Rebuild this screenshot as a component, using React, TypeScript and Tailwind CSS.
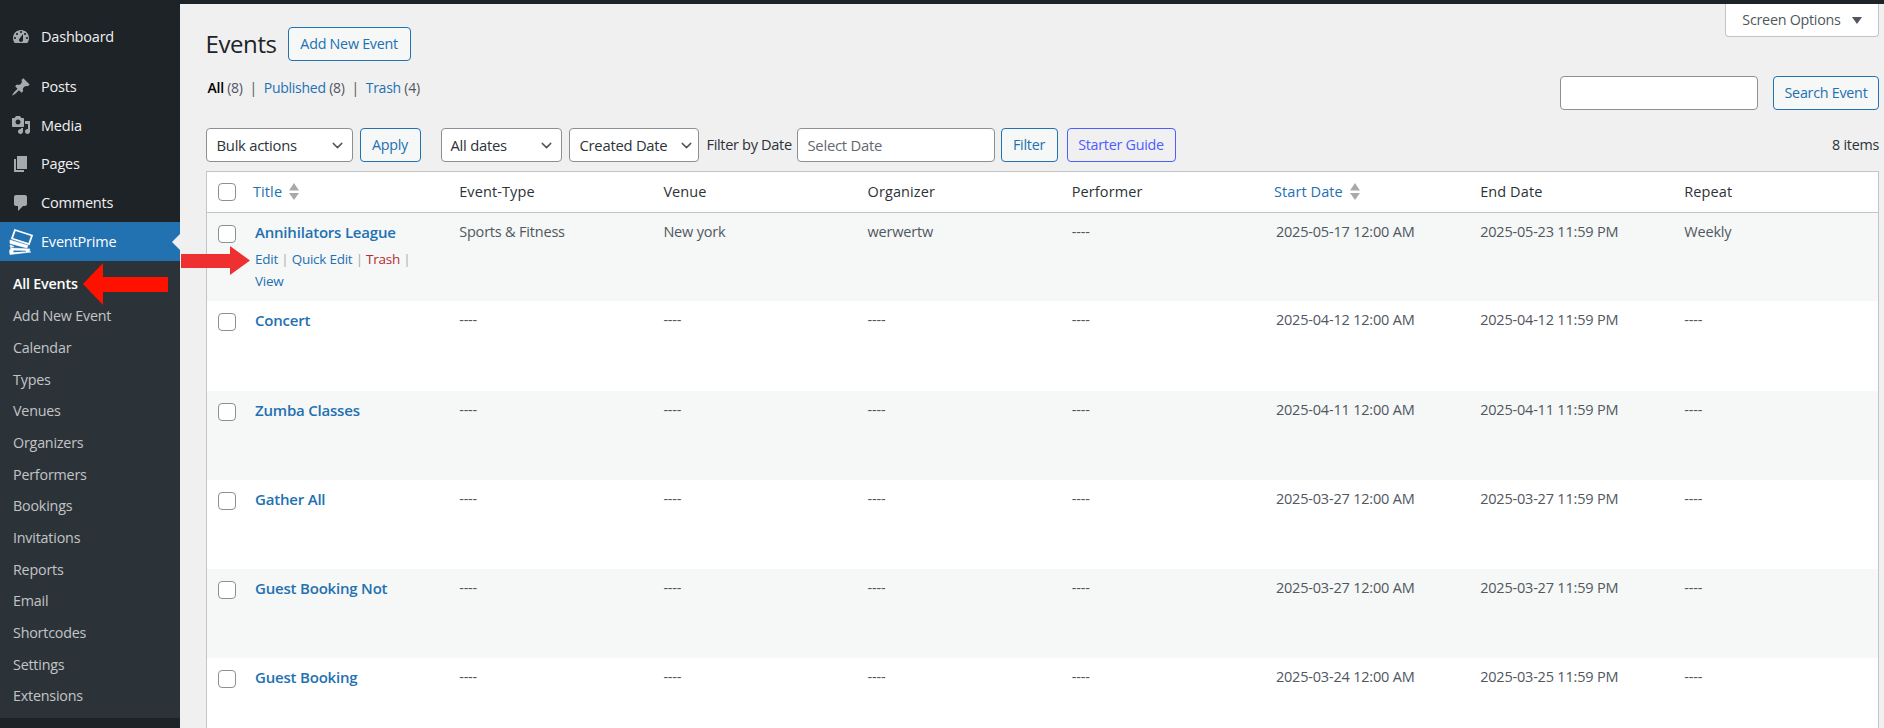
import { ChevronDown } from 'lucide-react';

const font = "font-['Open_Sans','Noto_Sans',sans-serif]";

const ICONS: Record<string, string> = {
  dashboard:
    'M3.76 16h12.48c1.1-1.37 1.76-3.11 1.76-5 0-4.42-3.58-8-8-8s-8 3.58-8 8c0 1.89.66 3.63 1.76 5zM10 4c.55 0 1 .45 1 1s-.45 1-1 1-1-.45-1-1 .45-1 1-1zM6 6c.55 0 1 .45 1 1s-.45 1-1 1-1-.45-1-1 .45-1 1-1zm8 0c.55 0 1 .45 1 1s-.45 1-1 1-1-.45-1-1 .45-1 1-1zm-5.37 5.55L12 7v6c0 1.1-.9 2-2 2s-2-.9-2-2c0-.57.24-1.08.63-1.45zM4 10c.55 0 1 .45 1 1s-.45 1-1 1-1-.45-1-1 .45-1 1-1zm12 0c.55 0 1 .45 1 1s-.45 1-1 1-1-.45-1-1 .45-1 1-1z',
  posts:
    'M10.44 3.02l1.82-1.82 6.36 6.35-1.83 1.82c-1.05-.68-2.48-.57-3.41.36l-.75.75c-.92.93-1.04 2.35-.35 3.41l-1.83 1.82-2.41-2.41-2.8 2.79c-.42.42-3.38 2.71-3.8 2.29s1.86-3.39 2.28-3.81l2.79-2.79L4.1 9.36l1.83-1.82c1.05.69 2.48.57 3.4-.36l.75-.75c.93-.92 1.05-2.35.36-3.41z',
  media:
    'M13 11V4c0-.55-.45-1-1-1h-1.67L9 1H5L3.67 3H2c-.55 0-1 .45-1 1v7c0 .55.45 1 1 1h10c.55 0 1-.45 1-1zM7 4.5c1.38 0 2.5 1.12 2.5 2.5S8.38 9.5 7 9.5 4.5 8.38 4.5 7 5.62 4.5 7 4.5zM14 6h5v10.5c0 1.38-1.12 2.5-2.5 2.5S14 17.88 14 16.5s1.12-2.5 2.5-2.5c.17 0 .34.02.5.05V9h-3V6zm-4 8.05V13h2v3.5c0 1.38-1.12 2.5-2.5 2.5S7 17.88 7 16.5 8.12 14 9.5 14c.17 0 .34.02.5.05z',
  pages: 'M6 15V2h10v13H6zm-1 1h8v2H3V5h2v11z',
  comments:
    'M5 2h9c1.1 0 2 .9 2 2v7c0 1.1-.9 2-2 2h-2l-5 5v-5H5c-1.1 0-2-.9-2-2V4c0-1.1.9-2 2-2z',
};

const TOP_MENU = [
  { label: 'Posts', icon: 'posts' },
  { label: 'Media', icon: 'media' },
  { label: 'Pages', icon: 'pages' },
  { label: 'Comments', icon: 'comments' },
];

const SUB_MENU = [
  'Add New Event',
  'Calendar',
  'Types',
  'Venues',
  'Organizers',
  'Performers',
  'Bookings',
  'Invitations',
  'Reports',
  'Email',
  'Shortcodes',
  'Settings',
  'Extensions',
];

const ROWS = [
  { title: 'Concert', start: '2025-04-12 12:00 AM', end: '2025-04-12 11:59 PM' },
  { title: 'Zumba Classes', start: '2025-04-11 12:00 AM', end: '2025-04-11 11:59 PM' },
  { title: 'Gather All', start: '2025-03-27 12:00 AM', end: '2025-03-27 11:59 PM' },
  { title: 'Guest Booking Not', start: '2025-03-27 12:00 AM', end: '2025-03-27 11:59 PM' },
  { title: 'Guest Booking', start: '2025-03-24 12:00 AM', end: '2025-03-25 11:59 PM' },
];

function MenuIcon({ name }: { name: string }) {
  return (
    <svg viewBox="0 0 20 20" className="w-5 h-5 fill-[#a7aaad]" fillRule="evenodd">
      <path d={ICONS[name]} />
    </svg>
  );
}

function TicketsLogo() {
  return (
    <svg viewBox="0 0 32 32" className="w-8 h-8 shrink-0 fill-white stroke-white">
      <path d="M10 5 L27 10.5 L24 19 L7 13.5 Z" fill="none" strokeWidth="1.8" />
      <path d="M5 15 L23 20.5 L22 23 L5 18.5 Z" strokeWidth="0.6" />
      <path d="M5 20 L9 21.5 L5.5 22.5 Z" strokeWidth="0.6" />
      <path d="M6 23 L25 24 L24 26.5 L26 27 L5 29.5 L4.5 26 Z" strokeWidth="0.6" />
      <path d="M8.5 25.6 L21 25.8 L21 26.6 L8.5 27.2 Z" fill="#2271b1" stroke="none" />
    </svg>
  );
}

function Checkbox() {
  return <span className="block w-[18px] h-[18px] bg-white border border-[#8c8f94] rounded" />;
}

function SortArrows() {
  return (
    <svg viewBox="0 0 10 17" className="w-2.5 h-[17px] fill-[#a7aaad]">
      <path d="M5 0 L10 7.5 L0 7.5 Z" />
      <path d="M0 10 L10 10 L5 17 Z" />
    </svg>
  );
}

function Select({ label, className }: { label: string; className: string }) {
  return (
    <div
      className={`h-[34px] flex items-center justify-between bg-white border border-[#8c8f94] rounded text-[14.8px] text-[#2c3338] ${className}`}
    >
      <span className="tracking-[-0.25px] whitespace-nowrap">{label}</span>
      <ChevronDown size={17} strokeWidth={2} className="text-[#50575e] shrink-0" />
    </div>
  );
}

function OutlineButton({ label, className }: { label: string; className: string }) {
  return (
    <button
      className={`h-[34px] flex items-center justify-center border rounded text-[14.3px] tracking-[-0.25px] whitespace-nowrap ${className}`}
    >
      {label}
    </button>
  );
}

function Sidebar() {
  return (
    <aside className="w-[180px] shrink-0 bg-[#1d2327] text-[14.5px] tracking-[-0.2px]">
      <div className="h-[61px] pt-[12px] flex items-start">
        <div className="h-[41px] w-full flex items-center pl-[11px] gap-[10px] text-[#f0f0f1]">
          <MenuIcon name="dashboard" />
          <span>Dashboard</span>
        </div>
      </div>
      <div className="pt-[2.6px]">
        {TOP_MENU.map((item) => (
          <div key={item.label} className="h-[38.6px] flex items-center pl-[11px] gap-[10px] text-[#f0f0f1]">
            <MenuIcon name={item.icon} />
            <span>{item.label}</span>
          </div>
        ))}
      </div>
      <div className="relative h-[39px] bg-[#2271b1] text-white flex items-center pl-[5px] gap-[4px]">
        <TicketsLogo />
        <span>EventPrime</span>
        <span className="absolute right-0 top-[12px] w-0 h-0 border-y-[8px] border-y-transparent border-r-[8px] border-r-[#f0f0f1]" />
      </div>
      <div className="bg-[#2c3338] h-[457px] pt-[7.4px] pl-[13px] text-[14.3px] text-[#c3c4c7]">
        <div className="h-[31.7px] flex items-center font-semibold text-white">All Events</div>
        {SUB_MENU.map((item) => (
          <div key={item} className="h-[31.7px] flex items-center">
            {item}
          </div>
        ))}
      </div>
    </aside>
  );
}

function TableHead() {
  const th = 'pl-2.5 text-left font-normal text-[#2c3338]';
  return (
    <tr className="h-[41px] border-b border-[#c3c4c7] bg-white tracking-[0.1px]">
      <th className="pl-[11px] w-[39px]">
        <Checkbox />
      </th>
      <th className="pl-2 text-left font-normal text-[#2271b1]">
        <span className="flex items-center gap-[7px]">
          Title <SortArrows />
        </span>
      </th>
      <th className={th}>Event-Type</th>
      <th className={th}>Venue</th>
      <th className={th}>Organizer</th>
      <th className={th}>Performer</th>
      <th className="pl-2 text-left font-normal text-[#2271b1]">
        <span className="flex items-center gap-[7px]">
          Start Date <SortArrows />
        </span>
      </th>
      <th className={th}>End Date</th>
      <th className={th}>Repeat</th>
    </tr>
  );
}

function EventRow({
  title,
  start,
  end,
  type = '----',
  venue = '----',
  organizer = '----',
  repeat = '----',
  odd,
  actions,
}: {
  title: string;
  start: string;
  end: string;
  type?: string;
  venue?: string;
  organizer?: string;
  repeat?: string;
  odd: boolean;
  actions?: boolean;
}) {
  const td = 'pl-2.5 pt-[9px] align-top text-[#50575e] leading-[20px] tracking-[-0.2px]';
  return (
    <tr className={`h-[89.3px] ${odd ? 'bg-[#f6f7f7]' : 'bg-white'}`}>
      <td className="pl-[11px] pt-3 align-top">
        <Checkbox />
      </td>
      <td className="pl-2.5 pt-[9px] align-top">
        <div className="text-[15px] leading-[20px] font-semibold text-[#2271b1] tracking-[-0.2px]">{title}</div>
        {actions && (
          <div className="mt-[6px] text-[13.5px] leading-[22px] text-[#2271b1] tracking-[-0.25px]">
            Edit <span className="text-[#a7aaad]">|</span> Quick Edit <span className="text-[#a7aaad]">|</span>{' '}
            <span className="text-[#b32d2e]">Trash</span> <span className="text-[#a7aaad]">|</span>
            <br />
            View
          </div>
        )}
      </td>
      <td className={td}>{type}</td>
      <td className={td}>{venue}</td>
      <td className={td}>{organizer}</td>
      <td className={td}>----</td>
      <td className={td}>{start}</td>
      <td className={td}>{end}</td>
      <td className={td}>{repeat}</td>
    </tr>
  );
}

export default function App() {
  return (
    <div className={`relative w-[1884px] h-[728px] overflow-hidden bg-[#f0f0f1] ${font}`}>
      <div className="h-1 bg-[#1d2327]" />
      <div className="flex h-[724px]">
        <Sidebar />
        <main className="flex-1 min-w-0 pl-[25.5px] pr-[5px] pt-[23px] relative">
          <div className="absolute right-[5px] top-0 w-[154px] h-[33px] bg-white border border-t-0 border-[#c3c4c7] rounded-b flex items-center justify-center gap-[11px] text-[14.3px] tracking-[-0.25px] text-[#50575e]">
            Screen Options
            <span className="w-0 h-0 border-x-[5px] border-x-transparent border-t-[7px] border-t-[#50575e]" />
          </div>

          <div className="flex items-center gap-[11px] h-[34px]">
            <h1 className="text-[24px] text-[#1d2327] tracking-[-0.4px]">Events</h1>
            <OutlineButton label="Add New Event" className="w-[123px] bg-[#f6f7f7] border-[#2271b1] text-[#2271b1]" />
          </div>

          <div className="flex justify-between mt-[15px]">
            <div className="text-[14px] tracking-[-0.25px] pl-[2px] text-[#50575e] leading-[24px]">
              <span className="font-semibold text-black">All</span> (8) &nbsp;|&nbsp;{' '}
              <span className="text-[#2271b1]">Published</span> (8) &nbsp;|&nbsp;{' '}
              <span className="text-[#2271b1]">Trash</span> (4)
            </div>
            <div className="flex gap-[15px]">
              <div className="w-[198px] h-[34px] bg-white border border-[#8c8f94] rounded" />
              <OutlineButton label="Search Event" className="w-[106px] bg-[#f6f7f7] border-[#2271b1] text-[#2271b1]" />
            </div>
          </div>

          <div className="flex items-center mt-[18px]">
            <Select label="Bulk actions" className="w-[147px] pl-[10px] pr-[6px]" />
            <OutlineButton label="Apply" className="w-[61px] ml-[7px] bg-[#f6f7f7] border-[#2271b1] text-[#2271b1]" />
            <Select label="All dates" className="w-[121px] ml-[20px] pl-[9px] pr-[6px]" />
            <Select label="Created Date" className="w-[130px] ml-[7px] pl-[10px] pr-[3px]" />
            <span className="ml-[8px] w-[90px] text-[14.6px] tracking-[-0.35px] text-[#2c3338] whitespace-nowrap">Filter by Date</span>
            <div className="w-[198px] h-[34px] bg-white border border-[#8c8f94] rounded flex items-center pl-[10px] text-[14.8px] tracking-[-0.25px] text-[#646970]">
              Select Date
            </div>
            <OutlineButton label="Filter" className="w-[57px] ml-[6px] bg-[#f6f7f7] border-[#2271b1] text-[#2271b1]" />
            <OutlineButton label="Starter Guide" className="w-[109px] ml-[9px] bg-[#f0f0f1] border-[#4f5cff] text-[#4f5cff]" />
            <span className="ml-auto text-[14.3px] tracking-[-0.25px] text-[#2c3338]">8 items</span>
          </div>

          <table className="w-full mt-[8.5px] table-fixed border-collapse border border-[#c3c4c7] text-[14.5px]">
            <thead>
              <TableHead />
            </thead>
            <tbody>
              <EventRow
                title="Annihilators League"
                type="Sports & Fitness"
                venue="New york"
                organizer="werwertw"
                start="2025-05-17 12:00 AM"
                end="2025-05-23 11:59 PM"
                repeat="Weekly"
                odd
                actions
              />
              {ROWS.map((row, i) => (
                <EventRow key={row.title} {...row} odd={i % 2 === 1} />
              ))}
            </tbody>
          </table>
        </main>
      </div>

      {/* annotation arrows pasted on the screenshot */}
      <svg viewBox="0 0 90 44" className="absolute left-[82px] top-[262px] w-[90px] h-[44px] fill-[#ff1100]">
        <path d="M1 22 L21 1 L21 15 L86 15 L86 30 L21 30 L21 43 Z" />
      </svg>
      <svg viewBox="0 0 70 30" className="absolute left-[181px] top-[246px] w-[70px] h-[30px] fill-[#ef3030]">
        <path d="M0 8 L49 8 L49 0 L69 14.5 L49 29 L49 22 L0 22 Z" />
      </svg>
    </div>
  );
}
